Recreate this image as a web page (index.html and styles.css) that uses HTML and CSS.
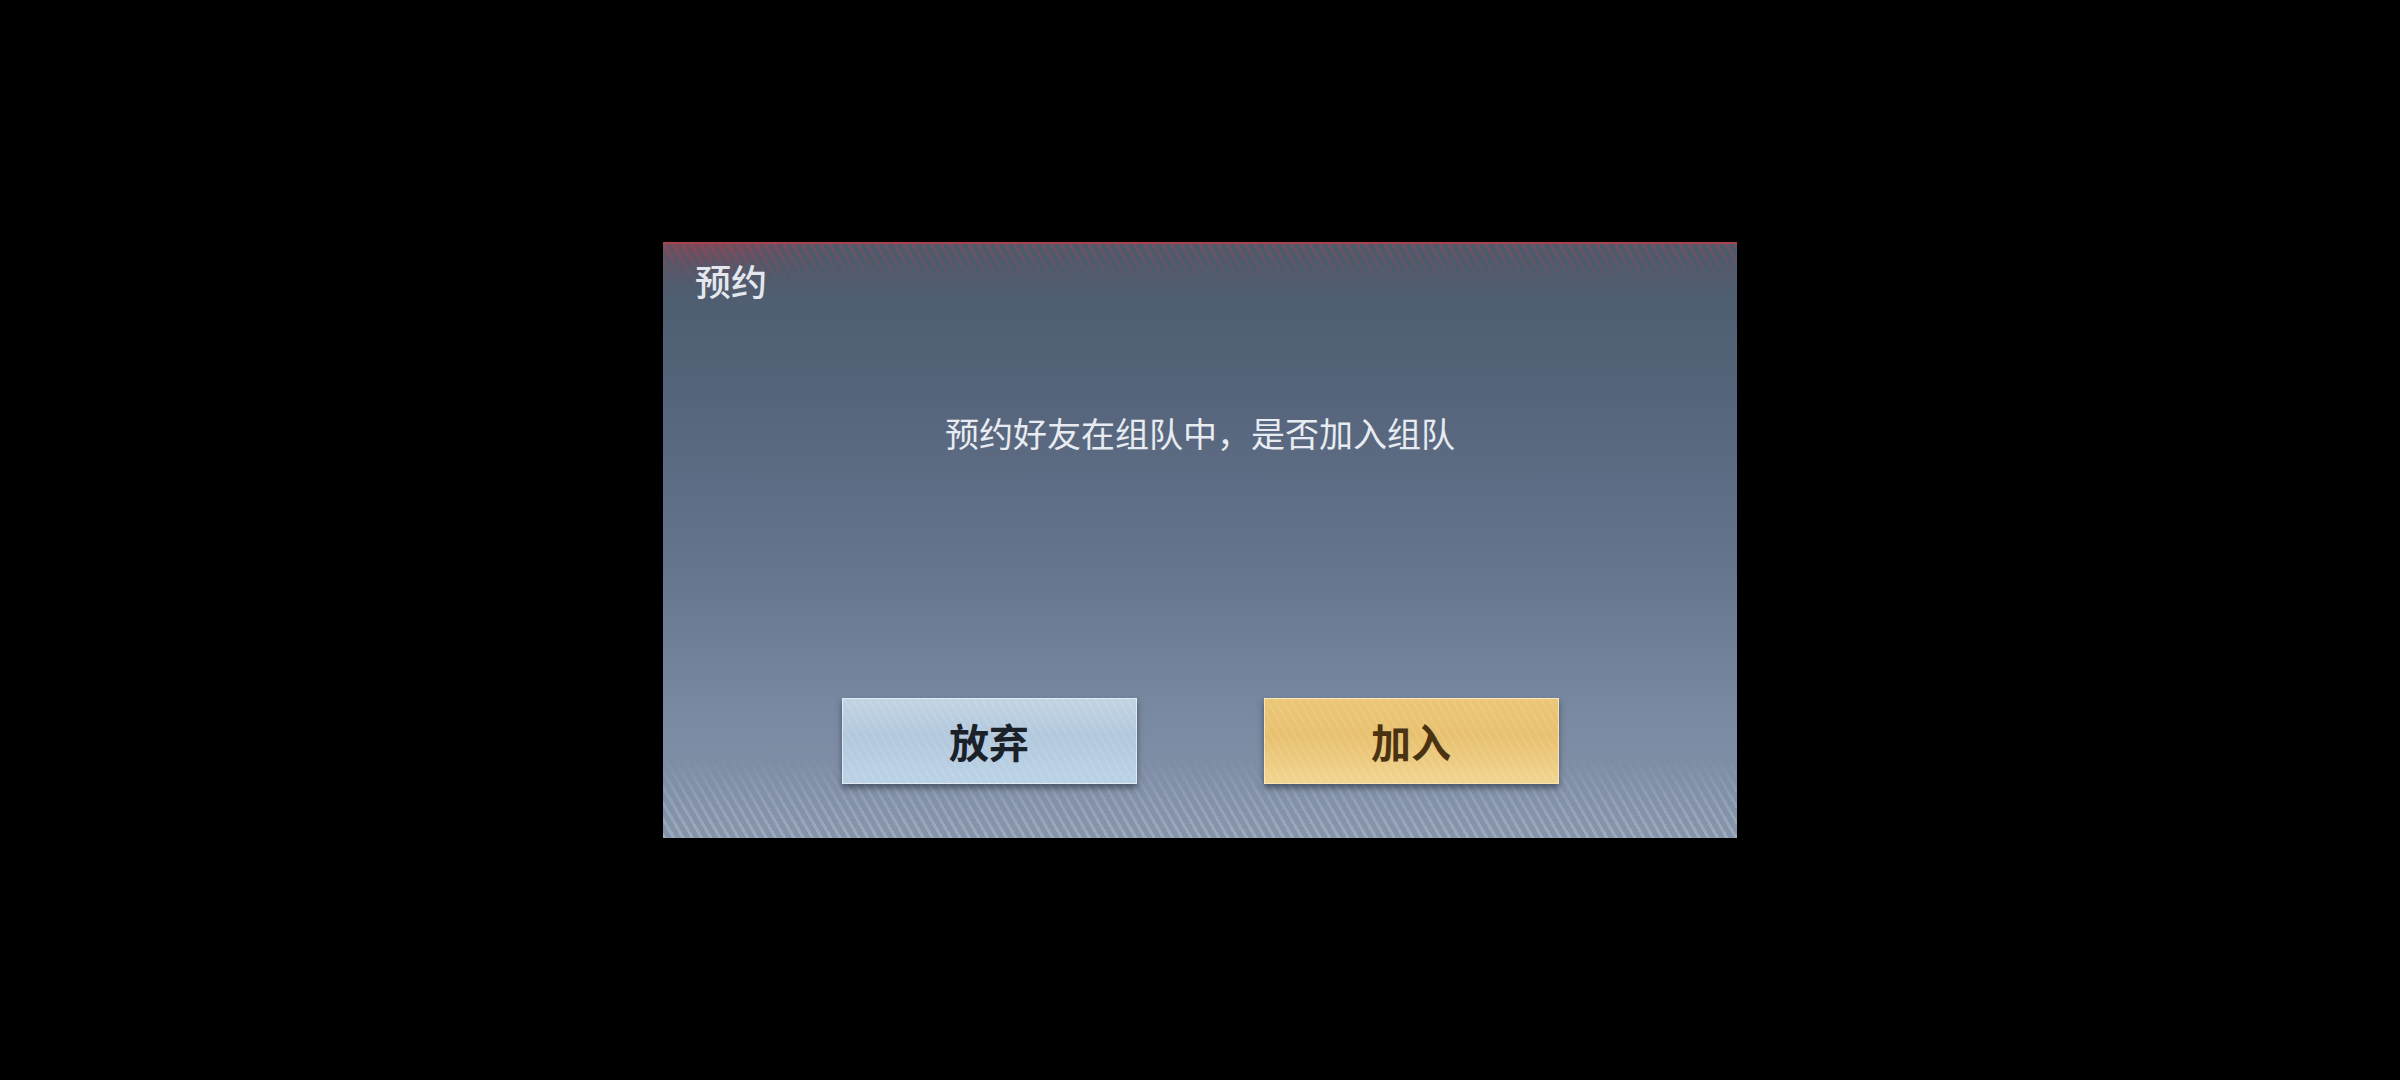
FILE: index.html
```html
<!DOCTYPE html>
<html lang="zh">
<head>
<meta charset="utf-8">
<link rel="stylesheet" href="styles.css">
</head>
<body>
<div class="screen">
  <div class="dialog">
    <div class="title">预约</div>
    <div class="message">预约好友在组队中，是否加入组队</div>
    <div class="actions">
      <button class="btn btn-cancel">放弃</button>
      <button class="btn btn-join">加入</button>
    </div>
  </div>
</div>
</body>
</html>
```
FILE: styles.css
```css
html, body {
  margin: 0;
  padding: 0;
  background: #000;
}
.screen {
  width: 2400px;
  height: 1080px;
  display: flex;
  align-items: center;
  justify-content: center;
  font-family: "Noto Sans CJK SC", "Noto Sans", sans-serif;
}
.dialog {
  position: relative;
  width: 1074px;
  height: 596px;
  box-sizing: border-box;
  padding: 17px 0 54px 0;
  display: flex;
  flex-direction: column;
  background: linear-gradient(180deg, #4c5a6b 0%, #55647a 25%, #65758e 55%, #7a8aa2 80%, #8795ab 100%);
  border-top: 2px solid #a84450;
  overflow: hidden;
}
.dialog::before {
  content: "";
  position: absolute;
  left: 0;
  right: 0;
  top: 0;
  height: 50px;
  background:
    radial-gradient(ellipse 120px 50px at 40px 0px, rgba(175,55,70,0.45), rgba(175,55,70,0) 100%),
    repeating-linear-gradient(60deg, rgba(170,70,85,0.4) 0 3px, rgba(0,0,0,0) 3px 8px);
  -webkit-mask-image: linear-gradient(180deg, #000 0%, rgba(0,0,0,0.5) 40%, rgba(0,0,0,0) 100%);
  mask-image: linear-gradient(180deg, #000 0%, rgba(0,0,0,0.5) 40%, rgba(0,0,0,0) 100%);
  pointer-events: none;
}
.dialog::after {
  content: "";
  position: absolute;
  left: 0;
  right: 0;
  bottom: 0;
  height: 80px;
  background:
    repeating-linear-gradient(60deg, rgba(205,216,232,0.32) 0 3px, rgba(0,0,0,0) 3px 8px);
  -webkit-mask-image: linear-gradient(0deg, #000 0%, rgba(0,0,0,0.6) 50%, rgba(0,0,0,0) 100%);
  mask-image: linear-gradient(0deg, #000 0%, rgba(0,0,0,0.6) 50%, rgba(0,0,0,0) 100%);
  pointer-events: none;
}
.title {
  position: relative;
  z-index: 1;
  margin-left: 32px;
  font-size: 36px;
  line-height: 38px;
  font-weight: 500;
  color: #e4e8ee;
}
.message {
  position: relative;
  z-index: 1;
  margin-top: 114px;
  text-align: center;
  font-size: 34px;
  line-height: 40px;
  color: #e8ecf2;
}
.actions {
  position: relative;
  z-index: 1;
  margin-top: auto;
  display: flex;
  justify-content: center;
  gap: 127px;
}
.btn {
  width: 295px;
  height: 86px;
  border: 1px solid rgba(255,255,255,0.55);
  font-family: "Noto Sans CJK SC", "Noto Sans", sans-serif;
  font-size: 40px;
  font-weight: 700;
  padding: 0;
  box-shadow: 0 4px 6px rgba(30,40,55,0.55);
  cursor: pointer;
}
.btn-cancel {
  color: #1b2129;
  background:
    repeating-linear-gradient(60deg, rgba(255,255,255,0.08) 0 2px, rgba(255,255,255,0) 2px 7px),
    linear-gradient(180deg, #c2d3e3 0%, #b2c8dc 45%, #bcd2e6 100%);
}
.btn-join {
  color: #4a3312;
  border-color: rgba(255,240,200,0.7);
  background:
    repeating-linear-gradient(60deg, rgba(255,255,255,0.08) 0 2px, rgba(255,255,255,0) 2px 7px),
    linear-gradient(180deg, #ebc677 0%, #e8c170 45%, #f1d590 100%);
}
```
